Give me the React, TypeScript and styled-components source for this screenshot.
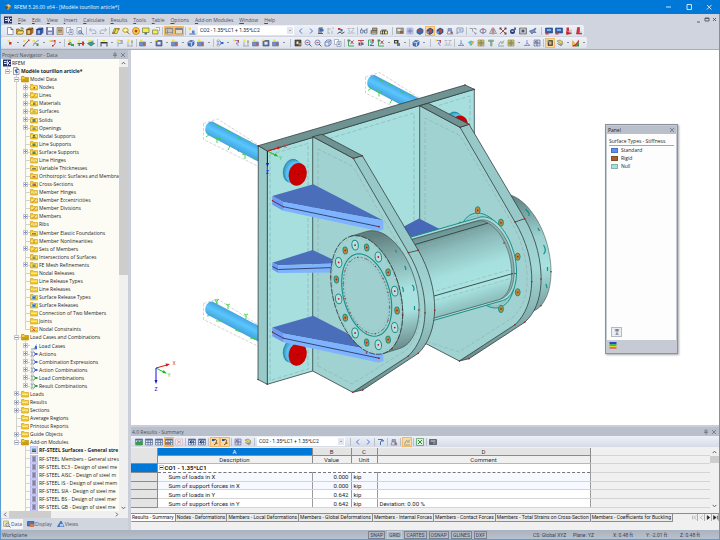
import React from 'react';
import styled, { createGlobalStyle, css } from 'styled-components';

const UI = `"Open Sans", "Noto Sans", sans-serif`;
const GRID = `Roboto, "Liberation Sans", sans-serif`;

const Global = createGlobalStyle`
  * { box-sizing: border-box; }
  html, body { margin: 0; height: 100%; }
  body { font: 5px/8px ${UI}; color: #1c1c24; background: #d0d4de; overflow: hidden; }
  button, select, input { font: inherit; color: inherit; }
  button { border: 0; padding: 0; background: none; white-space: nowrap; }
  svg { display: block; }
`;

/* ---------- icons: [path, fill, stroke] on a 16 unit grid ---------- */

type Shape = [string, string, string?];

const folder: Shape[] = [['M1 3h5l2 2h7v9H1z', '#f4c824', '#c89c1c'], ['M2 7h12v3H2z', '#fde888']];
const pageShape: Shape[] = [['M3 1h7l4 4v10H3z', '#ffffff', '#5b6478'], ['M10 1v4h4', 'none', '#5b6478']];
const sheet: Shape[] = [['M1 2h14v12H1z', '#dfe6f2', '#4a5e8c'], ['M1 2h14v3H1z', '#4a6ea8'], ['M1 9h14M6 5v9M11 5v9', 'none', '#6b7c9c']];

const ART: Record<string, Shape[]> = {
  app: [['M0 1h16v14H0z', '#24306c'], ['M2 5h5M2 9h5M9 3v10M12 5h3M12 11h3', 'none', '#ffffff'], ['M7 6h5v4H7z', '#c8d0f0']],
  logo: [['M2 6l5-4 4 3 4 1-3 4-3 4-5-2z', '#c9a13a'], ['M3 5l5 3-2 5-4-3z', '#4d4a48'], ['M8 2l5 3-4 3z', '#f0e2a0'], ['M10 9l3-2-1 5z', '#6a7cc0']],
  new: pageShape,
  open: [['M1 4h5l2 2h5v8H1z', '#c79a28', '#7a5c10'], ['M4 8h12l-3 6H1z', '#ffe06a', '#7a5c10'], ['M9 2h5v3', 'none', '#3b7a2c']],
  box: [['M1 5l5-3h8v9l-4 4H1z', '#c58a3a', '#5f3c10'], ['M1 5h9v10M10 5l4-3', 'none', '#5f3c10'], ['M4 7h4v6H4z', '#f0c27a']],
  boxBlue: [['M1 5l5-3h8v9l-4 4H1z', '#4a74c0', '#22346c'], ['M1 5h9v10M10 5l4-3', 'none', '#22346c'], ['M4 7h4v6H4z', '#9ab8ec']],
  save: [['M1 1h14v14H1z', '#7a86b8', '#474f80'], ['M4 1h8v6H4z', '#ffffff'], ['M4 10h8v5H4z', '#cdd3e6']],
  report: [['M2 1h12v14H2z', '#d8c6ae', '#8a7354'], ['M4 4h8M4 7h8M4 10h8', 'none', '#8a7354']],
  copy: [['M1 1h8v10H1z', '#ffffff', '#7f8aa4'], ['M6 5h8v10H6z', '#e7ecf7', '#7f8aa4'], ['M8 8h4M8 11h4', 'none', '#7f8cae']],
  preview: [['M2 1h9v13H2z', '#f3f6fb', '#7f8aa4'], ['M8 7a3 3 0 1 1 0 6a3 3 0 1 1 0-6', '#b9cdf0', '#3e5590'], ['M11 12l4 3', 'none', '#3e5590']],
  undo: [['M4 2L1 6l4 3M1 6h9q5 0 4 7H6', 'none', '#9fadc8']],
  redo: [['M12 2l3 4-4 3M15 6H6q-5 0-4 7h8', 'none', '#9fadc8']],
  plane: [['M1 13L5 3h9l-4 10z', '#f6e24a', '#6a5e10'], ['M4 13L8 3', 'none', '#4a7c34'], ['M11 2h4v4h-4zM1 10h4v4H1z', '#b07030']],
  zoomY: [['M7 2a5 4 0 1 1 0 9a5 4 0 1 1 0-9', '#f4e450', '#a48a18'], ['M9 9l6 5', 'none', '#c03a28'], ['M5 5h4v3H5z', '#ffffff']],
  target: [['M8 1a7 7 0 1 1 0 14a7 7 0 1 1 0-14', '#f0dc40', '#c04a20'], ['M8 5a3 3 0 1 1 0 6a3 3 0 1 1 0-6', '#c8402c']],
  winY: [['M1 2h13v9H1z', '#f6ea50', '#5e6430'], ['M5 11h5v4H5z', '#546c9c']],
  winY2: [['M1 6h11v8H1z', '#f6ea50', '#5e6430'], ['M8 1h7v7', '#ffffff', '#7c8090']],
  table: [['M1 2h14v12H1z', '#f4f1ea', '#5c5a58'], ['M1 2h14v3H1z', '#8f8b86'], ['M5 5v9M1 8h14M1 11h14', 'none', '#8f8b86']],
  table2: [['M1 2h14v12H1z', '#e9dcc6', '#5c5a58'], ['M1 2h14v4H1z', '#7f8290']],
  load: [['M1 1h5v5H1z', '#f6dc30'], ['M3 14h12', 'none', '#3c5ea6'], ['M8 7h5v6H8z', '#5c82c4']],
  prev: [['M10 3L5 8l5 5', 'none', '#2f6bd8']],
  next: [['M6 3l5 5-5 5', 'none', '#2f6bd8']],
  beam: [['M4 13V2h8M8 2v12', 'none', '#32456e'], ['M5 4h8v5H5z', '#3c6cb0'], ['M2 12h10v2H2z', '#555c6c']],
  dims: [['M2 14V2M2 4h6M10 2h4M10 7v7M2 12h4', 'none', '#aab2c2']],
  nodeR: [['M2 2h5v4H2z', '#c83c30'], ['M7 4h4v5H7z', '#3866b4'], ['M1 13l5-3 4 3 5-3', 'none', '#33425f']],
  xx: [['M1 3h6M9 3h6M1 12h14M3 5l3 5M9 10l4-5', 'none', '#aab2be']],
  glasses: [['M1 6h5v6H1zM9 6h5v6H9zM6 8h3M3 2v4M14 2v4', '#dfe6f6', '#3f557f']],
  section: [['M2 7h12v7H2z', '#e7dba6', '#44443e'], ['M5 2h9v5H5z', '#b7a66c', '#44443e'], ['M2 10h12', 'none', '#44443e']],
  section2: [['M1 8h14v6H1z', '#f3e166', '#3a3a34'], ['M3 5h10v3H3z', '#6c6a54'], ['M5 8v6M9 8v6', 'none', '#3a3a34']],
  view: [['M1 2h14v11H1z', '#a39d92', '#7d7870'], ['M3 4h6v4H3z', '#ece5d2'], ['M8 8h6v5H8z', '#8a6046']],
  mesh: [['M2 2h12v12H2z', '#c5cff0', '#9fa6cc'], ['M5 5h6v6H5z', '#8a70bc'], ['M2 8h12M8 2v12', 'none', '#8b97c4']],
  solid: [['M2 6l6-4 6 3v6l-6 4-6-3z', '#3a6cb4', '#20406e'], ['M2 6l6 3 6-4', 'none', '#c8402c']],
  solidR: [['M2 6l6-4 6 3v6l-6 4-6-3z', '#44588c', '#232e54'], ['M6 5h6v6H6z', '#d04030'], ['M2 9h4v4H2z', '#5ea0e0']],
  support: [['M4 3h7v5H4z', '#8ea2d4', '#6478a4'], ['M2 14h12M4 8l-2 6M11 8l3 6', 'none', '#8890a4'], ['M9 9h4v4H9z', '#b0483c']],
  frame: [['M2 14V2h12v8H5M5 10l-3 4', 'none', '#7f94c0'], ['M6 4h5v4H6z', '#a8b8dc']],
  move: [['M1 3h6v6M9 3h5v3M9 9l5 5M11 14h3v-3', 'none', '#8f97a4']],
  rotate: [['M2 8a6 4 0 1 1 12 0a6 4 0 1 1-12 0', 'none', '#5a78c0'], ['M8 2v12', 'none', '#c0504a']],
  mirror: [['M1 13L6 3v10zM15 13L10 3v10z', '#e2e2e8', '#70747e'], ['M8 1v14', 'none', '#c04a40']],
  scale: [['M2 2l12 12M14 2L2 14', 'none', '#c0362c'], ['M1 1h4v4H1zM11 11h4v4h-4zM11 1h4v4h-4z', '#4a4a5c']],
  globe: [['M7 4a5 5 0 1 1 0 10a5 5 0 1 1 0-10', '#2a3a7c'], ['M10 1h4v5h-4z', '#5a6aa0'], ['M5 7h4v3H5z', '#b8c4ec']],
  cam: [['M1 2h14v12H1z', '#b9b3a0', '#5d5850'], ['M8 4a4 4 0 1 1 0 8a4 4 0 1 1 0-8', '#38589c', '#ffffff']],
  cut: [['M1 8l6-2 7-4-3 6 3 3-6 0-2 3z', '#7a90c4', '#3e5590']],
  winB: [['M1 2h14v10H1z', '#2f64b0', '#233c70'], ['M4 4h8v4H4z', '#7fb0ea'], ['M1 11h6v4H1z', '#d03a30']],
  red: [['M3 1h5v8H3z', '#d03030'], ['M3 9l10 4-10 2zM8 7l5 5', '#b82828', '#b82828'], ['M10 5h4v4h-4z', '#c8ced8']],
  red2: [['M5 1h4v9l5 4H3z', '#cf3434', '#a83030'], ['M9 9h5v3H9z', '#c6ccd8']],
  node: [['M3 2h5v4H3z', '#f4e23c'], ['M6 6h5v5H6z', '#d0302c']],
  line: [['M3 14L14 2', 'none', '#4a4e58'], ['M2 2h5v4H2z', '#f4e23c'], ['M2 12h3v3H2zM12 1h3v3h-3z', '#d0302c']],
  line2: [['M2 14L7 6l7-4M3 9h10', 'none', '#7f94c0'], ['M1 2h5v4H1z', '#f4e23c'], ['M9 10h4v4H9z', '#4a8a4a']],
  poly: [['M3 4h11v6l-5 4', 'none', '#c05a54'], ['M2 2h4v4H2z', '#f4e23c'], ['M12 2h3v3h-3zM8 12h3v3H8z', '#d0302c']],
  hinge: [['M3 1h5v4H3z', '#f4e23c'], ['M4 6l5 2-3 3 8 3', 'none', '#3a8a4e'], ['M8 10h6v4H8z', '#36a05c'], ['M2 8h4v4H2z', '#c44a3a']],
  hinge2: [['M1 9h14', 'none', '#3e424c'], ['M2 3h4v4H2z', '#f4e23c'], ['M3 9h3v5H3z', '#3a9a4e'], ['M10 5h4v8h-4z', '#c43a34']],
  surf: [['M1 9l7-4 7 4-7 5z', '#3aa080', '#1f6a58'], ['M3 2h5v4H3z', '#f4e23c'], ['M9 3h4v3H9z', '#6ac0b0']],
  member: [['M1 6h14v3H1z', '#34363c'], ['M2 9v6M14 9v6', 'none', '#34363c'], ['M5 2h5v3H5z', '#f4e23c']],
  flag: [['M4 15V3h9v6H4', 'none', '#9aa2b0'], ['M2 1h5v4H2z', '#f4e23c'], ['M9 4h5v4H9z', '#a9b4c8']],
  loadY: [['M2 14h12M4 5v9M12 3v11', 'none', '#a2a8b4'], ['M3 1h4v4H3z', '#f4e23c'], ['M10 3h4v5h-4z', '#b8b080']],
  surfB: [['M1 6h12v8H1z', '#6f8fc8', '#5c72a0'], ['M2 1h5v4H2z', '#f4e23c'], ['M8 8h4v4H8z', '#c05a50']],
  openB: [['M2 3h12v11H2z', '#6a7fb0', '#2c3c68'], ['M5 6h6v5H5z', '#e6ecfa'], ['M1 1h4v3H1z', '#f4e23c']],
  cube: [['M2 6l5-3 7 1v7l-5 4-7-2z', '#4f7cc4', '#203c78'], ['M2 6l7 1 5-3M9 7v8', 'none', '#c8daf8']],
  lc: [['M2 2h5v3H2zM2 11h5v3H2z', '#ffffff', '#8a90a0'], ['M4 5v6M8 4l4 4-4 4', 'none', '#6e82b4'], ['M9 6h6v4H9z', '#3a64e0']],
  lcG: [['M2 2h5v3H2zM2 11h5v3H2z', '#ffffff', '#8a90a0'], ['M4 5v6M8 4l4 4-4 4', 'none', '#6e9a7c'], ['M9 6h6v4H9z', '#2fa04a']],
  force: [['M5 3h8v5H8l5 6', 'none', '#8a7ac0'], ['M2 1h4v4H2z', '#f4e23c'], ['M11 2h3v4h-3z', '#c2484c']],
  hand: [['M2 2h12v12H2z', '#58544c', '#302e2a'], ['M5 5h4v5H5z', '#f0e8c8'], ['M9 8h5v5H9z', '#c0824e']],
  zoom: [['M7 2a5 5 0 1 1 0 10a5 5 0 1 1 0-10', '#dce6f8', '#3c5290'], ['M10 10l5 5', 'none', '#3c5290'], ['M5 6h4v2H5z', '#c0483e']],
  wire: [['M2 6h8v8H2zM2 6l4-4h8v8l-4 4M10 6l4-4', 'none', '#6a80b8']],
  axX: [['M3 2v12h11', 'none', '#34a04a'], ['M7 3l6 7M13 3L7 10', 'none', '#b03838'], ['M1 1h5v4H1z', '#4a8a60']],
  axY: [['M2 3h12M8 3v11', 'none', '#c03a3a'], ['M8 7h5v5H8z', '#5a6ab0'], ['M3 7h3v6H3z', '#5a4a60']],
  axZ: [['M3 14V2h9', 'none', '#34a04a'], ['M6 6h7l-7 7h8', 'none', '#3a5ab8'], ['M10 1h4v4h-4z', '#c03a3a']],
  diag: [['M2 2h9v7H2z', '#3d4048'], ['M4 4h4v3H4z', '#f4e23c'], ['M8 8h6v6H8z', '#5c7a9c']],
  diag2: [['M2 14h12M3 12l4-7 3 4 4-6', 'none', '#8c98b0'], ['M8 5h5v4H8z', '#9ac0a0']],
  colors: [['M1 7l7-4 7 3-7 4z', '#58b8e0'], ['M3 8l5 2 5-2-5 6z', '#5ac070'], ['M9 6h4v3H9z', '#e8b040']],
  rainbow: [['M1 3l6 7 7-9v5l-7 9H1z', '#d03030'], ['M1 3v9h3L7 10z', '#e8d020'], ['M7 15l7-9v9z', '#30903c']],
  results: [['M4 3h9v10H4z', '#5a5a56', '#302e2a'], ['M6 5h5v6H6z', '#d8b45c'], ['M1 1h4v5H1z', '#b8c890']],
  yellow: [['M2 2h12v12H2z', '#e8d850', '#7d7a50'], ['M2 8h12M8 2v12', 'none', '#6e6e60'], ['M5 5h6v6H5z', 'none', '#9a9870']],
  bluegrid: [['M2 2h12v12H2z', '#cfd6ee', '#5e6490'], ['M2 8h12M8 2v12', 'none', '#5e6490'], ['M4 4h3v3H4z', '#7a6ab0']],
  paint: [['M2 4l6-2 6 4-5 3z', '#e8d850', '#7c7c64'], ['M3 9l5 2 6-2-4 5z', '#a8acb4', '#7c7c74']],
  graph: [['M2 13h12M5 13l3-5V2M8 8l6 5', 'none', '#7a8ec8']],
  tee: [['M3 2h10v3H3zM7 5h3v9H7z', '#7fb890', '#76a08a']],
  sheet,
  sheetG: [...sheet, ['M2 9l4-4 4 3 5-4v10H2z', '#3c9a4a']],
  sheetR: [...sheet, ['M1 9h9v4H1z', '#c8604a']],
  sheetP: [['M1 2h14v12H1z', '#f4e6ea', '#c8b4bc'], ['M4 5l8 6M12 5l-8 6', 'none', '#d8a0a4']],
  arrowIn: [...sheet, ['M4 8h8M7 5L4 8l3 3', 'none', '#203880']],
  curl: [['M4 4q8-3 7 3t-5 7', 'none', '#5c4420'], ['M2 2h5v4H2z', '#2c50a0'], ['M9 9h4v3H9z', '#8a6c30']],
  excel: [['M1 1h14v14H1z', '#dff2df', '#2c8a3c'], ['M4 4l8 8M12 4l-8 8', 'none', '#1f7a30']],
  printer: [['M1 3h14v10H1z', '#5c6270', '#3a3f4c'], ['M3 5h10v2H3z', '#d4d8e0'], ['M8 9h5v2H8z', '#a8b0c0']],
  filter: [['M2 3h9l-4 5v6', 'none', '#3a62b4'], ['M8 4h6v3H8z', '#5a80c8']],
  folder,
  folderOpen: [['M1 3h5l2 2h7v9H1z', '#d8a80c', '#b08810'], ['M2 4h5v4H2z', '#f6d038'], ['M4 9h10v4H4z', '#c49a18']],
  model: [...pageShape, ['M5 6l4-2 3 8-4 1z', '#4a6cac']],
  lcases: [['M2 14h12M8 14l5-9', 'none', '#7c90c0'], ['M10 8h4v6h-4z', '#3c6ae0']],
  module: [['M1 0h14v16H1z', '#d4d4fa', '#a0a0ec'], ['M4 4h8M4 8h8M4 12h8M8 4v8', 'none', '#60607c']],
  moduleOn: [['M1 0h14v16H1z', '#d4d4fa', '#a0a0ec'], ['M4 5h8v4H4z', '#3ca0a8'], ['M4 9h8v3H4z', '#605040']],
  display: [['M1 3h13v9H1z', '#4a78c4', '#23407c'], ['M6 8h8v6H6z', '#d07a50']],
  views: [['M1 13L8 2l6 11z', '#4a86d8', '#23509c'], ['M6 8h7v5H6z', '#a8c8f4']],
  dataTab: [['M1 2h10v11H1z', '#f4e6b0', '#a88c30'], ['M9 6a3 3 0 1 1 0 7a3 3 0 1 1 0-7', '#c8dcf8', '#3a62b4'], ['M12 12l3 3', 'none', '#3a62b4']],
  scaleTool: [['M2 2h12M8 2v12M3 6l5-4 5 4M4 14h8', 'none', '#44506c']],
  bars: [['M1 2h14v4H1z', '#2848c0'], ['M1 6h14v4H1z', '#40b860'], ['M1 10h14v4H1z', '#e8d020'], ['M1 13h14v2H1z', '#d03030']],
};

const badge = (s: Shape[]): Shape[] => [...folder, ...s];
Object.assign(ART, {
  fNode: badge([['M7 8h3v3H7z', '#d03030']]),
  fLine: badge([['M5 12l6-5', 'none', '#d07040']]),
  fMat: badge([['M6 7h5v5H6z', '#8c8440']]),
  fSurf: badge([['M5 7h6v4H5z', '#b4b070']]),
  fSolid: badge([['M5 6h6v6H5z', '#5a80a0']]),
  fOpen: badge([['M5 7h6v5H5z', '#8c9468']]),
  fSup: badge([['M6 6h4v3H6z', '#c84030'], ['M5 9h6v3H5z', '#2f9a48']]),
  fGreen: badge([['M5 7h6v5H5z', '#4a8c50']]),
  fWhite: badge([['M6 8h4v4H6z', '#fff8e0', '#d0b060']]),
  fRed: badge([['M5 8h6v3H5z', '#c87048']]),
  fBlue: badge([['M5 7h7v5H5z', '#5a80c8'], ['M8 8h3v3H8z', '#c05040']]),
  fX: badge([['M5 7l5 5M10 7l-5 5', 'none', '#c84838']]),
  fBar: badge([['M7 6h2v6H7z', '#c07828']]),
  fDark: badge([['M4 8h8v3H4z', '#8c8058']]),
  fCyan: badge([['M4 6h8v6H4z', '#6aa4c4'], ['M6 8h4v3H6z', '#3e6c9c']]),
});

const Glyph = styled.svg<{ $s?: number }>`
  flex: none;
  width: ${(p) => p.$s ?? 8}px;
  height: ${(p) => p.$s ?? 8}px;
`;

function Icon({ name, size }: { name: string; size?: number }) {
  return (
    <Glyph viewBox="0 0 16 16" $s={size} aria-hidden="true">
      {ART[name].map(([d, fill, stroke], i) => (
        <path key={i} d={d} fill={fill} stroke={stroke} strokeWidth={fill === 'none' ? 1.8 : 1.2} />
      ))}
    </Glyph>
  );
}

/* ---------- window frame ---------- */

const Window = styled.div`
  display: flex;
  flex-direction: column;
  height: 100vh;
  border: solid #5b9bd5;
  border-width: 0 1px 1px 1px;
`;

const TitleBar = styled.header`
  flex: none;
  display: flex;
  align-items: center;
  gap: 2px;
  height: 14px;
  padding: 0 7px 0 4px;
  margin: 0 -1px;
  background: #0078d7;
  color: #f2f8ff;
`;

const Caption = styled.h1`
  flex: 1;
  margin: 0;
  font: 5px/8px ${UI};
`;

const WinButtons = styled.div<{ $gap: number }>`
  display: flex;
  gap: ${(p) => p.$gap}px;
  margin-left: auto;
`;

const WinButton = styled.button`
  width: 8px;
  height: 8px;
`;

const MenuBar = styled.nav`
  flex: none;
  display: flex;
  align-items: center;
  gap: 6px;
  height: 11px;
  padding: 0 0 0 3px;
  background: #d0d4de;
  color: #4a4c58;
`;

const MenuItem = styled.button`
  &::first-letter { text-decoration: underline; }
`;

const ToolRow = styled.div`
  flex: none;
  display: flex;
  height: 12px;
`;

const Strip = styled.div`
  display: flex;
  align-items: center;
  height: 11px;
  padding: 0 0 0 4px;
  border-radius: 2px;
  background: linear-gradient(#eef1f7, #dfe3ec);
`;

const Tool = styled.button<{ $on?: boolean }>`
  display: flex;
  align-items: center;
  justify-content: center;
  width: 10px;
  height: 10px;
  ${(p) => p.$on && css`
    background: #fbd9a0;
    box-shadow: inset 0 0 0 1px #efba6c;
  `}
`;

const Drop = styled.button`
  width: 6px;
  height: 10px;
  display: flex;
  align-items: center;
  justify-content: center;
  &::after {
    content: '';
    border: 1px solid transparent;
    border-top-color: #33353c;
    border-bottom: 0;
  }
`;

const Rule = styled.span<{ $w: number }>`
  width: ${(p) => p.$w}px;
  height: 8px;
  background: linear-gradient(#b9bfcb, #b9bfcb) center / 1px 100% no-repeat;
`;

const ComboWrap = styled.label<{ $w: number }>`
  display: flex;
  align-items: center;
  width: ${(p) => p.$w}px;
  height: 9px;
  margin: 0 2px 0 1px;
  background: #ffffff;
`;

const Combo = styled.select`
  flex: 1;
  min-width: 0;
  height: 9px;
  padding: 0 2px;
  border: 0;
  appearance: none;
  background: #ffffff;
  font: 5px/9px ${GRID};
`;

const ComboArrow = styled.span`
  width: 6px;
  height: 7px;
  margin-right: 1px;
  background: #e3e6ed;
  display: flex;
  align-items: center;
  justify-content: center;
  &::after {
    content: '';
    border: 1px solid transparent;
    border-top-color: #50545e;
    border-bottom: 0;
  }
`;

/* A bar is written as words: icon names, "name!" for a pressed tool,
   "v" for a drop arrow, "|" and "||" for rules, "combo" for the load case list. */
function Tools({ spec, comboWidth = 96 }: { spec: string; comboWidth?: number }) {
  return (
    <>
      {spec.split(' ').map((w, i) => {
        if (w === '|') return <Rule key={i} $w={3} />;
        if (w === '||') return <Rule key={i} $w={6} />;
        if (w === 'v') return <Drop key={i} aria-label="More" />;
        if (w === 'combo')
          return (
            <ComboWrap key={i} $w={comboWidth}>
              <Combo aria-label="Load case">
                <option>CO2 - 1.35*LC1 + 1.35*LC2</option>
              </Combo>
              <ComboArrow />
            </ComboWrap>
          );
        const on = w.endsWith('!');
        const name = on ? w.slice(0, -1) : w;
        return (
          <Tool key={i} $on={on} aria-label={name}>
            <Icon name={name} />
          </Tool>
        );
      })}
    </>
  );
}

const BAR_1 =
  'new open box boxBlue save report copy preview | undo redo | plane zoomY target winY winY2 | table! table2! | load combo prev next beam dims nodeR xx | glasses section section2 || view mesh solid solidR! solidR support frame | move rotate mirror scale globe cam cut || winB winB red red2';
const BAR_2 =
  'node v line line2 v poly v | hinge hinge2 surf | member v flag loadY | surfB v openB v surfB v cube surfB v | lc v force loadY surfB openB surfB v || hand zoom zoom wire copy | axX axY axZ axX v diag v | cube v || force xx | graph colors yellow tee diag2 yellow v graph bluegrid | results! paint v rainbow v';

/* ---------- navigator ---------- */

const Body = styled.div`
  flex: 1;
  min-height: 0;
  display: flex;
  gap: 3px;
  border-top: 1px solid #a8acb4;
  background: #c9ced9;
`;

const Navigator = styled.aside`
  flex: none;
  display: flex;
  flex-direction: column;
  width: 127px;
`;

const PaneTitle = styled.div`
  flex: none;
  display: flex;
  align-items: center;
  justify-content: space-between;
  height: 9px;
  padding: 0 2px 0 1px;
  background: #b9c0cb;
  color: #4c5058;
`;

const PaneButtons = styled.div`
  display: flex;
  gap: 2px;
`;

const PaneButton = styled.button`
  width: 6px;
  height: 6px;
`;

const TreeArea = styled.div`
  flex: 1;
  min-height: 0;
  display: flex;
  background: #fcfcf4;
`;

const Tree = styled.ul`
  flex: 1;
  min-width: 0;
  display: grid;
  grid-auto-rows: 1fr;
  margin: 0;
  padding: 0 0 0 2px;
  list-style: none;
  overflow: hidden;
`;

const Row = styled.li<{ $bold?: boolean }>`
  display: flex;
  align-items: center;
  min-height: 0;
  white-space: nowrap;
  font-weight: ${(p) => (p.$bold ? 700 : 400)};
`;

const Guide = styled.span<{ $line: 'none' | 'full' | 'tee' | 'end' }>`
  flex: none;
  align-self: stretch;
  display: flex;
  align-items: center;
  justify-content: center;
  width: 9px;
  background:
    linear-gradient(#d2d2ce, #d2d2ce) 4px 0 / 1px ${(p) => (p.$line === 'none' ? '0' : p.$line === 'end' ? '50%' : '100%')} no-repeat,
    linear-gradient(#d2d2ce, #d2d2ce) 4px 4px / ${(p) => (p.$line === 'tee' || p.$line === 'end' ? '5px' : '0')} 1px no-repeat;
`;

const Toggle = styled.button`
  display: flex;
  width: 5px;
  height: 5px;
  background: #fdfdfd;
  border: 1px solid #c4c8d2;
`;

const ToggleMark = styled.svg`
  width: 3px;
  height: 3px;
`;

const IconCell = styled.span`
  flex: none;
  display: flex;
  width: 9px;
`;

type Node = { level: number; icon: string; text: string; state?: '+' | '-'; bold?: boolean };

const parse = (level: number, list: string): Node[] =>
  list
    .trim()
    .split('\n')
    .map((l) => {
      const [mark, icon, text] = l.trim().split('|');
      return { level, icon, text, state: mark === '+' || mark === '-' ? mark : undefined } as Node;
    });

const NODES: Node[] = [
  { level: 0, icon: 'app', text: 'RFEM' },
  { level: 1, icon: 'model', text: 'Modèle tourillon article*', state: '-', bold: true },
  { level: 2, icon: 'folderOpen', text: 'Model Data', state: '-' },
  ...parse(3, `
    +|fNode|Nodes
    +|fLine|Lines
    +|fMat|Materials
    +|fSurf|Surfaces
    +|fSolid|Solids
    +|fOpen|Openings
    .|fSup|Nodal Supports
    .|fGreen|Line Supports
    +|fGreen|Surface Supports
    .|fWhite|Line Hinges
    .|fDark|Variable Thicknesses
    .|fRed|Orthotropic Surfaces and Membra
    +|fBlue|Cross-Sections
    .|fWhite|Member Hinges
    .|fLine|Member Eccentricities
    .|fLine|Member Divisions
    +|fLine|Members
    .|fWhite|Ribs
    +|fDark|Member Elastic Foundations
    .|fBar|Member Nonlinearities
    +|fLine|Sets of Members
    .|fOpen|Intersections of Surfaces
    +|fOpen|FE Mesh Refinements
    .|folder|Nodal Releases
    .|folder|Line Release Types
    .|fWhite|Line Releases
    .|fCyan|Surface Release Types
    .|fCyan|Surface Releases
    .|folder|Connection of Two Members
    .|folder|Joints
    .|fX|Nodal Constraints`),
  { level: 2, icon: 'folderOpen', text: 'Load Cases and Combinations', state: '-' },
  ...parse(3, `
    +|lcases|Load Cases
    +|lc|Actions
    +|lc|Combination Expressions
    +|lc|Action Combinations
    +|lcG|Load Combinations
    +|lcG|Result Combinations`),
  ...parse(2, `
    +|folder|Loads
    +|folder|Results
    +|folder|Sections
    .|folder|Average Regions
    .|folder|Printout Reports
    +|folder|Guide Objects
    -|folderOpen|Add-on Modules`),
  { level: 3, icon: 'moduleOn', text: 'RF-STEEL Surfaces - General stre', bold: true },
  ...parse(3, `
    .|module|RF-STEEL Members - General stres
    .|module|RF-STEEL EC3 - Design of steel me
    .|module|RF-STEEL AISC - Design of steel m
    .|module|RF-STEEL IS - Design of steel mem
    .|module|RF-STEEL SIA - Design of steel me
    .|module|RF-STEEL BS - Design of steel mer
    .|module|RF-STEEL GB - Design of steel me`),
];

/* Whether another node of the given level follows before its parent ends. */
const goesOn = (i: number, level: number) => {
  for (let j = i + 1; j < NODES.length; j++) {
    if (NODES[j].level === level) return true;
    if (NODES[j].level < level) return false;
  }
  return level === 3;
};

function TreeRow({ index }: { index: number }) {
  const n = NODES[index];
  const guides = [];
  for (let l = 1; l <= n.level; l++) {
    const more = goesOn(index, l);
    const own = l === n.level;
    guides.push(
      <Guide key={l} $line={own ? (more ? 'tee' : 'end') : more ? 'full' : 'none'}>
        {own && n.state && (
          <Toggle aria-label={n.state === '+' ? 'Expand' : 'Collapse'}>
            <ToggleMark viewBox="0 0 3 3">
              <path d={n.state === '+' ? 'M0 1h3v1H0zM1 0h1v3H1z' : 'M0 1h3v1H0z'} fill="#8490b8" />
            </ToggleMark>
          </Toggle>
        )}
      </Guide>,
    );
  }
  return (
    <Row $bold={n.bold}>
      {guides}
      <IconCell>
        <Icon name={n.icon} />
      </IconCell>
      {n.text}
    </Row>
  );
}

const VScroll = styled.div<{ $w: number }>`
  flex: none;
  display: flex;
  flex-direction: column;
  align-items: center;
  width: ${(p) => p.$w}px;
  background: #f0f0f0;
`;

const HScroll = styled.div`
  flex: none;
  display: flex;
  align-items: center;
  height: 7px;
  padding-right: 8px;
  background: #f0f0f0;
`;

const Thumb = styled.span<{ $len: string; $dir: 'v' | 'h' }>`
  background: #cdcdcd;
  ${(p) => (p.$dir === 'v' ? `width: 100%; height: ${p.$len};` : `height: 100%; width: ${p.$len};`)}
`;

const Spacer = styled.span`
  flex: 1;
`;

const ScrollButton = styled.button`
  flex: none;
  width: 8px;
  height: 8px;
  display: flex;
  align-items: center;
  justify-content: center;
`;

const ARROWS = { up: 'M1 5l3-3 3 3', down: 'M1 3l3 3 3-3', left: 'M5 1L2 4l3 3', right: 'M3 1l3 3-3 3' };

function Arrow({ dir }: { dir: keyof typeof ARROWS }) {
  return (
    <ScrollButton aria-label={`Scroll ${dir}`}>
      <Glyph viewBox="0 0 8 8" $s={5}>
        <path d={ARROWS[dir]} fill="none" stroke="#505050" strokeWidth="1.4" />
      </Glyph>
    </ScrollButton>
  );
}

const NavTabs = styled.div`
  flex: none;
  display: flex;
  align-items: center;
  height: 12px;
  gap: 3px;
  padding-left: 1px;
  background: #d0d5de;
  color: #4c5468;
`;

const NavTab = styled.button<{ $on?: boolean }>`
  display: flex;
  align-items: center;
  height: 10px;
  padding: 0 1px;
  ${(p) => p.$on && css`background: #f3f5f9;`}
`;

function PaneMarks() {
  return (
    <PaneButtons>
      <PaneButton aria-label="Pin">
        <Glyph viewBox="0 0 6 6" $s={6}>
          <path d="M2 1h2v2H2zM1 3.500h4M3 3.500V6" fill="none" stroke="#6a7080" strokeWidth=".7" />
        </Glyph>
      </PaneButton>
      <PaneButton aria-label="Close">
        <Glyph viewBox="0 0 6 6" $s={6}>
          <path d="M1 1l4 4M5 1L1 5" stroke="#6a7080" strokeWidth=".8" />
        </Glyph>
      </PaneButton>
    </PaneButtons>
  );
}

/* ---------- model view ---------- */

type P = [number, number];

const rim = (t: number, cx: number, cy: number, s: number): P => {
  const a = (t * Math.PI) / 180;
  return [cx + s * 36 * Math.cos(a), cy + s * (18.4 * Math.cos(a) + 56.4 * Math.sin(a))];
};

const arc = (c: P, s: number, from: number, to: number): P[] =>
  Array.from({ length: 61 }, (_, i) => rim(from + ((to - from) * i) / 60, c[0], c[1], s));

const d = (pts: P[], close = true) =>
  'M' + pts.map(([x, y]) => `${x.toFixed(1)} ${y.toFixed(1)}`).join('L') + (close ? 'Z' : '');

const circle = (c: P, s: number) => d(arc(c, s, 0, 360));
const sweep = (a: P, b: P, s: number) => d([...arc(b, s, -117, 63), ...arc(a, s, 63, -117)]);

const DISC: P = [366.7, 295];
const DISC_BACK: P = [383, 290];
const TUBE_END: P = [487.5, 260.5];

const INK = '#31403f';
const DARK = '#6f9392';
const EDGE = '#97c9c8';
const SIDE = '#9fd2d1';
const FACE = '#a6dfdd';
const RING = '#159089';

const Viewport = styled.div`
  flex: 1;
  min-height: 0;
  position: relative;
  background: #ffffff;
  overflow: hidden;
`;

const Scene = styled.svg`
  width: 100%;
  height: 100%;
  text { font: 5px ${GRID}; text-anchor: middle; }
`;

function Rod({ dx, dy, end = false }: { dx: number; dy: number; end?: boolean }) {
  return (
    <g transform={`translate(${dx} ${dy})`}>
      <path d="M203.500 123.500l14-4.500 41 26M203.500 123.500v16l55 27" fill="none" stroke="#b8b8b8" strokeWidth=".6" strokeDasharray="3 1.500" />
      <path d="M212.500 121.500L259 146v16l-51-27c-3-2-3-5-2.500-7.500s3-6.500 7-6z" fill="url(#rod)" />
      {end ? (
        <path d="M207 136l7-1M217 119v5l-2-5m2 2l2-2M228 129v-4l-2-1m2 1l2-1M246 139v-4l-2-1m2 1l2-1M216 141l6 0M235 150l6 2M250 158l5 1" stroke="#35d035" strokeWidth=".9" fill="none" />
      ) : (
        <path d="M206 137l4-3M217 126l5 2M217 143v-4l-3-2M217 139l4-1M228 150l2-4 M237 150l2 2M245 159v-4l-3-1M226 130l5 2M238 138l4 2M247 141l4 1M253 158l3 2" stroke="#35d035" strokeWidth=".9" fill="none" />
      )}
    </g>
  );
}

function Pin({ x, y }: { x: number; y: number }) {
  return (
    <g transform={`translate(${x} ${y}) rotate(14)`}>
      <ellipse cx="-7" cy="-2" rx="8.500" ry="12" fill="#4ea8dc" />
      <ellipse cx="-6" cy="-2" rx="8.500" ry="11.500" fill="none" stroke={RING} strokeWidth=".8" />
      <ellipse cx="-3" cy="-1" rx="9" ry="11.500" fill="#58bff6" />
      <ellipse rx="9" ry="11.500" fill="#c80000" />
      <circle r=".6" fill="#500" />
    </g>
  );
}

function Gusset({ dy }: { dy: number }) {
  return (
    <g transform={`translate(0 ${dy})`}>
      <path d="M272.300 196l41-11.700 70 36.200-100-18.500z" fill="#4a6eba" />
      <path d="M283.300 202l100 18.500v9.300l-5 1.200-95-20.300z" fill="#7db3ff" />
      <path d="M272.300 196l11 6v8.700l-11-6z" fill="#6f98f2" />
      <path d="M272 200.500l11.300 6.200 95.700 20" fill="none" stroke="#222c50" strokeWidth=".8" />
      <circle cx="379" cy="226.700" r=".9" fill="#b01818" />
      <circle cx="272.500" cy="200.500" r=".7" fill="#b01818" />
      <circle cx="283.500" cy="206.700" r=".7" fill="#b01818" />
    </g>
  );
}

const RIB2_DASH = 'M425 341V118l34 17 3 4 47 79c12 20 19 42 18 64 0 16-6 28-15 36l-53 34z';
const RIB1_DASH = 'M318 366V149l34 17 3 4 47 81c12 20 18 42 18 62 0 18-6 30-15 38l-53 33z';

const FAR_BOLTS: P[] = [[477.7, 210.3], [501, 222.7], [517.7, 256.7], [517.7, 292.3], [501, 309], [460.7, 225.7]];

const MARKS: P[] = [
  [258, 146], [258, 379.5], [267.3, 384.3], [465, 85], [474.3, 89.5], [460, 127.3], [469, 124.3], [353.3, 158.3],
  [362.3, 155.7], [408.3, 252.7], [418.3, 250.3], [515, 222], [524.7, 218.7], [531.7, 281.7], [541, 279],
  [551, 271.7], [541, 305.7], [524.7, 322.3], [515, 324.7], [459.5, 361], [469, 358.7], [425, 313], [434.7, 310.3],
  [408.3, 356], [418.3, 353.3], [352.7, 392.3], [362.7, 390], [402.7, 315], [418.7, 310], [330.7, 277], [392, 349], [366.5, 353],
  [487, 223.3], [515, 273.5], [504, 243],
];

function Model() {
  return (
    <Scene viewBox="131 50 588 375" preserveAspectRatio="xMinYMin meet" role="img" aria-label="3D model of the trunnion">
      <defs>
        <linearGradient id="rod" gradientUnits="userSpaceOnUse" x1="236" y1="132" x2="228" y2="148">
          <stop offset="0" stopColor="#3f9cd8" />
          <stop offset=".45" stopColor="#5ac6ff" />
          <stop offset="1" stopColor="#3f9ad2" />
        </linearGradient>
        <linearGradient id="tube" gradientUnits="userSpaceOnUse" x1="440" y1="232" x2="466" y2="316">
          <stop offset="0" stopColor="#6c9494" />
          <stop offset=".22" stopColor="#8dbcbc" />
          <stop offset=".5" stopColor="#a5e0de" />
          <stop offset=".72" stopColor="#a9e4e2" />
          <stop offset="1" stopColor="#80afae" />
        </linearGradient>
        <linearGradient id="disc" gradientUnits="userSpaceOnUse" x1="368" y1="236" x2="392" y2="352">
          <stop offset="0" stopColor="#607f7e" />
          <stop offset=".25" stopColor="#86b3b2" />
          <stop offset=".5" stopColor="#a8e2e0" />
          <stop offset=".68" stopColor="#a8e2e0" />
          <stop offset="1" stopColor="#678888" />
        </linearGradient>
        <linearGradient id="far" gradientUnits="userSpaceOnUse" x1="518" y1="195" x2="536" y2="318">
          <stop offset="0" stopColor="#5f8280" />
          <stop offset=".35" stopColor="#9bd0cf" />
          <stop offset=".6" stopColor="#a8e2e0" />
          <stop offset="1" stopColor="#6d9190" />
        </linearGradient>
        <linearGradient id="band" gradientUnits="userSpaceOnUse" x1="0" y1="250" x2="0" y2="392">
          <stop offset="0" stopColor={EDGE} />
          <stop offset=".35" stopColor="#a2d8d6" />
          <stop offset=".7" stopColor="#83afae" />
          <stop offset="1" stopColor="#6a8c8b" />
        </linearGradient>
        <linearGradient id="band2" gradientUnits="userSpaceOnUse" x1="0" y1="218" x2="0" y2="361">
          <stop offset="0" stopColor={EDGE} />
          <stop offset=".35" stopColor="#a2d8d6" />
          <stop offset=".7" stopColor="#83afae" />
          <stop offset="1" stopColor="#6a8c8b" />
        </linearGradient>
      </defs>

      <Rod dx={0} dy={0} />
      <Rod dx={162} dy={-46.5} />
      <Rod dx={0} dy={180} end />

      {/* back plate */}
      <path d="M267.300 151l207-61.700V140L440 300l-127.300 71-45.400 13.300z" fill={FACE} stroke={INK} strokeWidth=".8" />
      <path d="M258.300 145.700l9 5.300v233.300l-9.300-4.800z" fill="#98caca" stroke={INK} strokeWidth=".8" />
      <path d="M270 154.500v226l38-11.500M270 154.500l38-11v226M318 142l96-29V290M427 109l43-13v30" fill="none" stroke="#8fb3b6" strokeWidth=".7" strokeDasharray="4 2" />
      <path d="M258.300 145.700L465 85l9.300 4.300L267.300 151z" fill={DARK} stroke={INK} strokeWidth=".8" />

      {/* far side: pin, flange, rib */}
      <Pin x={459} y={127} />
      <path d={sweep([500, 257.5], [515, 253.3], 1)} fill="url(#far)" stroke={INK} strokeWidth=".5" />
      <path d="M525.500 209l3.500 4v3M538 228l1.500 3M543.500 245q3 4 1 8l-1 1M547.500 267v4M546 284l1 4" fill="none" stroke={RING} strokeWidth="1.200" />
      <path d="M460 127.300l9-3L524.700 218.700C536 238 542 262 541 283c-1 17-6 30-16.300 39.300L469 358.700l-9.700 2.300L500 300z" fill="url(#band2)" stroke={INK} strokeWidth=".8" />
      <path d="M419.700 105.700L460 127.300 515 222c11 18 17.500 40 16.700 60-.5 18-6 33-16.700 42.700L459.300 361l-32.600-17-7 1z" fill={SIDE} stroke={INK} strokeWidth=".8" />
      <path d="M419.700 105.700l8.600-2.400L469 124.300l-9 3z" fill={DARK} stroke={INK} strokeWidth=".8" />
      <path d={RIB2_DASH} fill="none" stroke="#94adb0" strokeWidth=".6" strokeDasharray="4 2" />
      <path d="M515 222l9.700-3.300" stroke={INK} strokeWidth=".8" />
      <path d="M403 227l16-8.500 24 12.300-28 11.200z" fill="#4668b6" />
      <path d="M412 240l31-10v3l-28 11z" fill="#7db3ff" />

      {/* weld ring and tube */}
      <path d={circle([486.5, 260.5], 0.8)} fill="#9ccfce" stroke={RING} strokeWidth="1" />
      <path d={circle([485.5, 261], 0.76)} fill="none" stroke="#77a9a8" strokeWidth=".6" />
      {FAR_BOLTS.map(([x, y], i) => (
        <g key={i}>
          <ellipse cx={x} cy={y} rx="2.400" ry="3.600" fill="#c48a3a" stroke={RING} strokeWidth="1" />
          <circle cx={x} cy={y} r=".9" fill="#8a3a18" />
        </g>
      ))}
      <path d={sweep([383, 290], [491, 259], 0.71)} fill="#a9d9d8" stroke={RING} strokeWidth="1" />
      <path d={sweep([383, 290], [490, 259.5], 0.67)} fill="#8ab5b4" stroke={INK} strokeWidth=".5" />
      <path d={sweep(DISC_BACK, TUBE_END, 0.67)} fill="url(#tube)" stroke={INK} strokeWidth=".5" />
      <path d="M415 244.500l72-21.200M434 296l79-22.500" stroke={INK} strokeWidth=".9" />
      <path d="M420 247l68-20M436 300l76-22M436 291l76-22" stroke="#8fb0b0" strokeWidth=".6" strokeDasharray="4 2" />

      {/* near rib */}
      <path d="M353.300 158.300l9-2.600 56 94.600C429 269 435 290 434.700 310c-.5 18-6 33-16.400 43.300L362.700 390l-10 2.300L390 300z" fill="url(#band)" stroke={INK} strokeWidth=".8" />
      <path d="M312.700 136.700l40.600 21.600 55 94.400C419 271 425.500 292 425 313c-.5 18-6 33-16.700 43L352.700 392.300l-40-21.300z" fill={SIDE} stroke={INK} strokeWidth=".8" />
      <path d="M312.700 136.700l9-2.400 40.600 21.400-9 2.600z" fill={DARK} stroke={INK} strokeWidth=".8" />
      <path d={RIB1_DASH} fill="none" stroke="#94adb0" strokeWidth=".6" strokeDasharray="4 2" />
      <path d="M408.300 252.700l10-2.400" stroke={INK} strokeWidth=".8" />

      <Gusset dy={0} />
      <path d="M272.300 262.700l40.400-12.700 20 9.500v4l-54.400 1.800z" fill="#4a6eba" />
      <path d="M278.300 265.500l56-2v9l-56 .500z" fill="#7db3ff" />
      <path d="M272.300 262.700l6 2.800v7.500l-6-3.500z" fill="#6f98f2" />
      <path d="M272.300 266.500l6 3 56-2" fill="none" stroke="#222c50" strokeWidth=".8" />
      <Pin x={297.7} y={174.3} />
      <Pin x={297.7} y={354.3} />
      <Gusset dy={131.5} />

      {/* near disc */}
      <path d={sweep(DISC, DISC_BACK, 1)} fill="url(#disc)" stroke={INK} strokeWidth=".6" />
      <path d="M395.500 250l1 2.500M404.500 266q2 2 1 4M412 285q3 2 1.500 6M402 287q2 2 1 5M414.500 306v4" fill="none" stroke={RING} strokeWidth="1.200" />
      <path d={circle(DISC, 1)} fill="#a0d2d1" stroke={INK} strokeWidth=".9" strokeDasharray="6 1" />
      <path d={circle(DISC, 0.96)} fill="none" stroke="#8db4b4" strokeWidth=".5" strokeDasharray="3 2" />
      <path d={circle(DISC, 0.695)} fill="none" stroke={RING} strokeWidth="1.100" />
      <path d={circle([366.5, 295.5], 0.645)} fill="#9fcfcf" stroke="#5a7072" strokeWidth=".8" strokeDasharray="2 1.500" />
      <path d={circle([366.5, 295.5], 0.6)} fill="none" stroke="#94b4b6" strokeWidth=".5" strokeDasharray="3 2" />
      {Array.from({ length: 16 }, (_, k) => {
        const [x, y] = rim(k * 22.5, DISC[0], DISC[1], 0.843);
        const [ix, iy] = rim(k * 22.5, 366.5, 295.5, 0.645);
        const big = k % 2 === 1;
        return (
          <g key={k}>
            <ellipse cx={x} cy={y} rx={big ? 3.2 : 2.2} ry={big ? 5 : 3.5} fill={big ? '#b8dedd' : '#c48a3a'} stroke={RING} strokeWidth="1" transform={`rotate(-8 ${x} ${y})`} />
            <circle cx={x} cy={y} r=".9" fill="#b02020" />
            <circle cx={ix} cy={iy} r=".6" fill="#b02020" />
          </g>
        );
      })}

      {/* drawn joints */}
      {MARKS.map(([x, y], i) => (
        <circle key={i} cx={x} cy={y} r=".8" fill="#a01c1c" />
      ))}

      {/* axes */}
      {([[156, 368], [267.5, 151]] as P[]).map(([x, y], i) => (
        <g key={i} transform={`translate(${x} ${y})`} strokeWidth="1">
          <path d="M0 0l11-3" stroke="#e01010" />
          <path d="M14-4l-4.500-.500 1 3z" fill="#e01010" />
          <path d="M0 0l7 3.700" stroke="#10c010" />
          <path d="M11 5.500L7.500 2l-1 3z" fill="#10c010" />
          <path d="M0 0v12" stroke="#1010e0" />
          <path d="M0 16l-1.500-4h3z" fill="#1010e0" />
          <text x="18" y="-3" fill="#e04040">X</text>
          <text x="13" y="9" fill="#40c840">Y</text>
          <text x="0" y="23" fill="#2020e0">Z</text>
        </g>
      ))}
    </Scene>
  );
}

const Floating = styled.section`
  position: absolute;
  top: 74px;
  right: 41px;
  width: 73px;
  height: 230px;
  display: flex;
  flex-direction: column;
  padding: 1px;
  background: #c5cad5;
  border: 1px solid #8a909c;
  box-shadow: 1px 1px 2px rgba(0, 0, 0, 0.35);
`;

const FloatTitle = styled.div`
  display: flex;
  justify-content: space-between;
  align-items: center;
  height: 8px;
  padding: 0 1px;
  background: #b9c0cb;
`;

const FloatBody = styled.div`
  flex: 1;
  display: flex;
  flex-direction: column;
  padding: 3px 2px 1px;
  background: #fdfdfd;
  white-space: nowrap;
`;

const FloatHeading = styled.div`
  border-bottom: 1px solid #a8a8a8;
`;

const Legend = styled.ul`
  margin: 0;
  padding: 0;
  list-style: none;
`;

const LegendRow = styled.li`
  display: flex;
  align-items: center;
  gap: 3px;
  height: 8px;
  padding-left: 2px;
`;

const Swatch = styled.span<{ $c: string }>`
  width: 7px;
  height: 5px;
  background: ${(p) => p.$c};
  border: 1px solid rgba(0, 0, 0, 0.2);
`;

const FloatButton = styled.button`
  display: flex;
  align-items: center;
  justify-content: center;
  width: 11px;
  height: 10px;
  margin: auto 0 2px 2px;
  background: #eceef2;
  border: 1px solid #b4b8c0;
`;

const FloatTabs = styled.div`
  flex: none;
  height: 12px;
  padding: 1px 2px;
`;

/* ---------- results ---------- */

const Work = styled.main`
  flex: 1;
  min-width: 0;
  display: flex;
  flex-direction: column;
`;

const Results = styled.section`
  flex: none;
  display: flex;
  flex-direction: column;
  height: 103px;
  margin-top: 2px;
  background: #f0f0f0;
`;

const ResultTools = styled.div`
  flex: none;
  display: flex;
  align-items: center;
  height: 11px;
  padding-left: 3px;
  background: linear-gradient(#eef1f8, #d5dae6);
`;

const Sheet = styled.div`
  flex: none;
  display: flex;
  height: 61px;
  margin-top: 1px;
`;

const Grid = styled.table`
  flex: 1;
  height: 60px;
  table-layout: fixed;
  border-collapse: collapse;
  background: #f0f0f0;
  font: 6px/7px ${GRID};
`;

const Th = styled.th<{ $on?: boolean }>`
  padding: 0;
  font-weight: 400;
  background: ${(p) => (p.$on ? '#0078d7' : '#e4e4e4')};
  color: ${(p) => (p.$on ? '#ffffff' : '#333')};
  border: 1px solid #8c8c8c;
  border-width: 0 1px 1px 0;
`;

const Sub = styled(Th)`
  background: #f0f0f0;
  border-bottom-color: #b8b8b8;
`;

const Td = styled.td<{ $right?: boolean; $tint?: boolean; $indent?: boolean }>`
  padding: 0 2px 0 ${(p) => (p.$indent ? 11 : 2)}px;
  text-align: ${(p) => (p.$right ? 'right' : 'left')};
  background: ${(p) => (p.$tint ? '#f6f9ff' : '#ffffff')};
  border: 1px solid #9c9c9c;
  border-width: 0 1px 1px 0;
  border-bottom-color: #d4d4d4;
  white-space: nowrap;
`;

const Group = styled.td`
  padding: 0 1px;
  background: #ffffff;
  border: 1px dashed #777;
  border-right: 1px solid #9c9c9c;
  font-weight: 700;
`;

const GroupLine = styled.div`
  display: flex;
  align-items: center;
  gap: 1px;
`;

const Blank = styled.td`
  border-bottom: 1px solid #d4d4d4;
`;

const SheetTabs = styled.div`
  flex: none;
  display: flex;
  height: 9px;
  margin: 4px 0 0;
  border-top: 1px solid #8c8c8c;
  overflow: hidden;
`;

const SheetTab = styled.button<{ $on?: boolean }>`
  height: 8px;
  padding: 0 1px;
  border: solid #8c8c8c;
  border-width: 0 1px 1px 0;
  border-radius: 0 0 1px 1px;
  background: ${(p) => (p.$on ? '#ffffff' : '#ececec')};
  font: 5px/7px ${GRID};
`;

const Pager = styled.div`
  display: flex;
  margin-left: auto;
`;

const PageButton = styled.button`
  display: flex;
  align-items: center;
  justify-content: center;
  width: 7px;
  height: 7px;
  border-right: 1px solid #b0b0b0;
`;

const ROWS: [string, string, string, string][] = [
  ['Sum of loads in X', '0.000', 'kip', ''],
  ['Sum of support forces in X', '0.000', 'kip', ''],
  ['Sum of loads in Y', '0.642', 'kip', ''],
  ['Sum of support forces in Y', '0.642', 'kip', 'Deviation:  0.00 %'],
];

const TABS = [
  'Results - Summary', 'Nodes - Deformations', 'Members - Local Deformations', 'Members - Global Deformations',
  'Members - Internal Forces', 'Members - Contact Forces', 'Members - Total Strains on Cross-Section',
  'Members - Coefficients for Buckling',
];

const PAGERS = ['M1 1v6M7 1L3 4l4 3', 'M6 1L2 4l4 3', 'M2 1l4 3-4 3z', 'M1 1l4 3-4 3zM7 1v6'];

/* ---------- status ---------- */

const Status = styled.footer`
  flex: none;
  display: flex;
  align-items: center;
  height: 9px;
  padding: 0 12px 0 1px;
  background: linear-gradient(#a9b2bf, #b9c1cc);
  color: #3c4250;
`;

const Switches = styled.div`
  display: flex;
  gap: 2px;
  margin: 0 46px 0 auto;
`;

const Switch = styled.button<{ $off?: boolean }>`
  height: 8px;
  padding: 0 1px;
  border: 1px solid ${(p) => (p.$off ? '#c8ced8' : '#7c8492')};
  font: 5px/6px ${GRID};
`;

const Readouts = styled.div`
  display: grid;
  grid-template-columns: 40px 40px 33px 34px 27px;
  font: 5px/8px ${GRID};
  white-space: nowrap;
`;

const MENUS = ['File', 'Edit', 'View', 'Insert', 'Calculate', 'Results', 'Tools', 'Table', 'Options', 'Add-on Modules', 'Window', 'Help'];

export default function App() {
  return (
    <Window>
      <Global />
      <TitleBar>
        <Icon name="logo" />
        <Caption>RFEM 5.26.00 x64 - [Modèle tourillon article*]</Caption>
        <WinButtons $gap={12}>
          {['M1 4h5', 'M2 1.500h4.500v5H2z', 'M2 2l4.500 4.500M6.500 2L2 6.500'].map((p, i) => (
            <WinButton key={p} aria-label={['Minimize', 'Maximize', 'Close'][i]}>
              <Glyph viewBox="0 0 8 8"><path d={p} fill="none" stroke="#ffffff" strokeWidth=".8" /></Glyph>
            </WinButton>
          ))}
        </WinButtons>
      </TitleBar>
      <MenuBar>
        <Icon name="app" />
        {MENUS.map((m) => <MenuItem key={m}>{m}</MenuItem>)}
        <WinButtons $gap={0}>
          {['M2 6h3', 'M2 2h4v3H2zM2 2.500h4', 'M2 2l3 3M5 2L2 5'].map((p, i) => (
            <WinButton key={p} aria-label={['Minimize view', 'Restore view', 'Close view'][i]}>
              <Glyph viewBox="0 0 8 8"><path d={p} fill="none" stroke="#50545e" strokeWidth=".9" /></Glyph>
            </WinButton>
          ))}
        </WinButtons>
      </MenuBar>
      <ToolRow><Strip><Tools spec={BAR_1} /></Strip></ToolRow>
      <ToolRow><Strip><Tools spec={BAR_2} /></Strip></ToolRow>

      <Body>
        <Navigator>
          <PaneTitle>Project Navigator - Data<PaneMarks /></PaneTitle>
          <TreeArea>
            <Tree>{NODES.map((_, i) => <TreeRow key={i} index={i} />)}</Tree>
            <VScroll $w={9}>
              <Arrow dir="up" />
              <Thumb $dir="v" $len="46%" />
              <Spacer />
              <Arrow dir="down" />
            </VScroll>
          </TreeArea>
          <HScroll>
            <Arrow dir="left" />
            <Thumb $dir="h" $len="42px" />
            <Spacer />
            <Arrow dir="right" />
          </HScroll>
          <NavTabs>
            <NavTab $on><Icon name="dataTab" />Data</NavTab>
            <NavTab><Icon name="display" />Display</NavTab>
            <NavTab><Icon name="views" />Views</NavTab>
          </NavTabs>
        </Navigator>

        <Work>
          <Viewport>
            <Model />
            <Floating>
              <FloatTitle>
                Panel
                <PaneButton aria-label="Close panel">
                  <Glyph viewBox="0 0 6 6" $s={6}><path d="M1 1l4 4M5 1L1 5" stroke="#6a7080" strokeWidth=".8" /></Glyph>
                </PaneButton>
              </FloatTitle>
              <FloatBody>
                <FloatHeading>Surface Types - Stiffness</FloatHeading>
                <Legend>
                  <LegendRow><Swatch $c="#5b8ff5" />Standard</LegendRow>
                  <LegendRow><Swatch $c="#a5632a" />Rigid</LegendRow>
                  <LegendRow><Swatch $c="#a5e0dd" />Null</LegendRow>
                </Legend>
                <FloatButton aria-label="Panel options"><Icon name="scaleTool" size={6} /></FloatButton>
              </FloatBody>
              <FloatTabs><Icon name="bars" size={8} /></FloatTabs>
            </Floating>
          </Viewport>

          <Results>
            <PaneTitle>4.0 Results - Summary<PaneMarks /></PaneTitle>
            <ResultTools>
              <Tools
                comboWidth={88}
                spec="sheetG sheet sheet sheetR! sheetP | arrowIn arrowIn | curl! curl! | bluegrid paint | combo || prev next | filter | support | diag2! | excel | printer"
              />
            </ResultTools>
            <Sheet>
              <Grid>
                <colgroup>
                  <col width="26" /><col width="155" /><col width="39" /><col width="26" /><col width="213" /><col />
                </colgroup>
                <thead>
                  <tr>
                    <Th rowSpan={2} />
                    <Th $on>A</Th><Th>B</Th><Th>C</Th><Th>D</Th><Blank />
                  </tr>
                  <tr>
                    <Sub>Description</Sub><Sub>Value</Sub><Sub>Unit</Sub><Sub>Comment</Sub><Blank />
                  </tr>
                </thead>
                <tbody>
                  <tr>
                    <Th $on />
                    <Group colSpan={4}>
                      <GroupLine>
                        <Toggle aria-label="Collapse">
                          <ToggleMark viewBox="0 0 3 3"><path d="M0 1h3v1H0z" fill="#333" /></ToggleMark>
                        </Toggle>
                        CO1 - 1.35*LC1
                      </GroupLine>
                    </Group>
                    <Blank />
                  </tr>
                  {ROWS.map(([a, b, c, e], i) => (
                    <tr key={a}>
                      <Th />
                      <Td $indent $tint={i < 2}>{a}</Td>
                      <Td $right $tint={i < 2}>{b}</Td>
                      <Td $tint={i < 2}>{c}</Td>
                      <Td $tint={i < 2}>{e}</Td>
                      <Blank />
                    </tr>
                  ))}
                </tbody>
              </Grid>
              <VScroll $w={9}>
                <Arrow dir="up" />
                <Thumb $dir="v" $len="7px" />
                <Spacer />
                <Arrow dir="down" />
              </VScroll>
            </Sheet>
            <SheetTabs>
              {TABS.map((t, i) => <SheetTab key={t} $on={i === 0}>{t}</SheetTab>)}
              <Pager>
                {PAGERS.map((p, i) => (
                  <PageButton key={p} aria-label={['First', 'Previous', 'Next', 'Last'][i]}>
                    <Glyph viewBox="0 0 8 8" $s={5}>
                      <path d={p} fill={i > 1 ? '#222' : 'none'} stroke={i > 1 ? '#222' : '#999'} />
                    </Glyph>
                  </PageButton>
                ))}
              </Pager>
            </SheetTabs>
          </Results>
        </Work>
      </Body>

      <Status>
        Workplane
        <Switches>
          {['SNAP', 'GRID', 'CARTES', 'OSNAP', 'GLINES', 'DXF'].map((s) => (
            <Switch key={s} $off={s === 'GRID'}>{s}</Switch>
          ))}
        </Switches>
        <Readouts>
          <span>CS: Global XYZ</span>
          <span>Plane: YZ</span>
          <span>X:  0.48 ft</span>
          <span>Y:  -2.01 ft</span>
          <span>Z:  0.48 ft</span>
        </Readouts>
      </Status>
    </Window>
  );
}
